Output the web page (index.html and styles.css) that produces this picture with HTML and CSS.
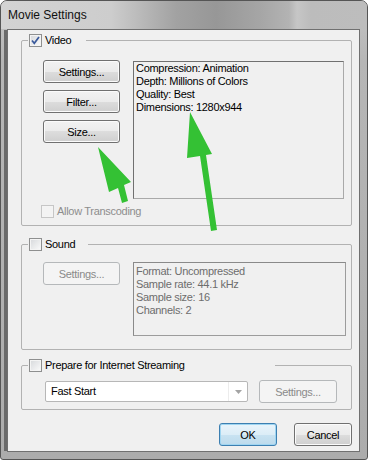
FILE: index.html
```html
<!DOCTYPE html>
<html lang="en">
<head>
    <meta charset="UTF-8">
    <title>Movie Settings</title>
    <link rel="stylesheet" href="styles.css">
</head>
<body>

    <div class="window">
        <div class="titlebar">Movie Settings</div>

        <div class="client">

            <!-- Video -->
            <fieldset class="group">
                <legend class="group-title title-video">
                    <span class="check checked">
                        <svg width="11" height="11" viewBox="0 0 11 11"><polyline points="2,5.5 4.3,8.3 9,2" fill="none" stroke="#3b5a9c" stroke-width="1.7"/></svg>
                    </span>
                    Video
                </legend>
                <div class="group-body video-body">
                    <div class="group-row">
                        <div class="button-stack">
                            <button class="btn">Settings...</button>
                            <button class="btn">Filter...</button>
                            <button class="btn">Size...</button>
                        </div>
                        <div class="info info-video">
                            <div>Compression: Animation</div>
                            <div>Depth: Millions of Colors</div>
                            <div>Quality: Best</div>
                            <div>Dimensions: 1280x944</div>
                        </div>
                    </div>
                    <div class="option disabled">
                        <span class="check"></span>
                        Allow Transcoding
                    </div>
                </div>
            </fieldset>

            <!-- Sound -->
            <fieldset class="group group-sound">
                <legend class="group-title title-sound">
                    <span class="check"></span>
                    Sound
                </legend>
                <div class="group-body sound-body">
                    <div class="group-row">
                        <div class="button-stack">
                            <button class="btn" disabled>Settings...</button>
                        </div>
                        <div class="info info-sound">
                            <div>Format: Uncompressed</div>
                            <div>Sample rate: 44.1 kHz</div>
                            <div>Sample size: 16</div>
                            <div>Channels: 2</div>
                        </div>
                    </div>
                </div>
            </fieldset>

            <!-- Streaming -->
            <fieldset class="group group-stream">
                <legend class="group-title title-stream">
                    <span class="check"></span>
                    Prepare for Internet Streaming
                </legend>
                <div class="group-body stream-body">
                    <div class="combo">
                        <span class="combo-text">Fast Start</span>
                        <span class="combo-arrow">
                            <svg width="7" height="4" viewBox="0 0 7 4"><polygon points="0,0 7,0 3.5,4" fill="#a4a4a4"/></svg>
                        </span>
                    </div>
                    <button class="btn btn-wide" disabled>Settings...</button>
                </div>
            </fieldset>

            <div class="dialog-buttons">
                <button class="btn btn-dialog btn-default">OK</button>
                <button class="btn btn-dialog">Cancel</button>
            </div>
        </div>

        <!-- green annotation arrows -->
        <svg class="arrows" width="368" height="460" viewBox="0 0 368 460">
            <polygon points="98,147 131,182 124,185 128,201 122,203 118,188 109,192" fill="#34c134"/>
            <polygon points="190,112 212,154 206,155 217,230 211,231 200,156 187,158" fill="#34c134"/>
        </svg>
    </div>

</body>
</html>
```

FILE: styles.css
```css
body {
    margin: 0;
    background-color: #ffffff;
    font-family: "Liberation Sans", Arial, sans-serif;
    font-size: 11px;
    letter-spacing: -0.3px;
    color: #000;
}
.window {
    position: relative;
    width: 368px;
    height: 460px;
    box-sizing: border-box;
    border: 1px solid #555;
    border-radius: 7px 7px 3px 3px;
    background: linear-gradient(180deg, #c4c4c4 0, #b6b6b6 60px, #acacac 100%);
    overflow: hidden;
}
.titlebar {
    height: 28px;
    line-height: 28px;
    padding-left: 7px;
    font-size: 12px;
    letter-spacing: 0;
    color: #111;
    background: linear-gradient(90deg, #d3d3d3 0, #cdcdcd 110px, #a2a2a2 175px, #979797 215px, #a6a6a6 260px, #b3b3b3 288px, #c6c6c6 296px, #bcbcbc 310px, #bdbdbd 100%);
}
.client {
    box-sizing: border-box;
    width: 353px;
    height: 423px;
    margin-left: 6px;
    border: 1px solid #707070;
    background-color: #f0f0f0;
    padding: 4px 0 0 13px;
    box-shadow: -4px 0 0 -1px #6a6a6a;
}

/* group boxes */
.group {
    box-sizing: border-box;
    width: 331px;
    margin: 0;
    padding: 0;
    min-width: 0;
    border: 1px solid #b2b2b2;
    border-radius: 2px;
}
.group-sound {
    margin-top: 12px;
}
.group-stream {
    margin-top: 9px;
}
.group-title {
    box-sizing: border-box;
    display: flex;
    align-items: center;
    gap: 3px;
    height: 13px;
    line-height: 13px;
    margin-left: 6px;
    padding: 0 0 0 1px;
}
.title-video { width: 58px; }
.title-sound { width: 60px; }
.title-stream { width: 247px; }

.check {
    box-sizing: border-box;
    flex: none;
    width: 13px;
    height: 13px;
    border: 1px solid #8e8f8f;
    background: linear-gradient(135deg, #d6d8db, #fbfbfb);
    box-shadow: inset 0 0 0 1px #f4f4f4;
}
.check svg {
    display: block;
}
.option {
    display: flex;
    align-items: center;
    gap: 3px;
    height: 13px;
    line-height: 13px;
    margin: 6px 0 0 -2px;
}
.option.disabled {
    color: #8d8d8d;
}
.option.disabled .check {
    border-color: #c6c6c6;
    background: #f3f3f3;
}

.video-body {
    padding: 13px 0 7px 21px;
}
.sound-body {
    padding: 11px 0 13px 21px;
}
.stream-body {
    display: flex;
    align-items: center;
    gap: 11px;
    padding: 8px 0 6px 23px;
}
.group-row {
    display: flex;
    align-items: flex-start;
    gap: 13px;
}
.button-stack {
    display: flex;
    flex-direction: column;
    gap: 7px;
}

/* buttons */
.btn {
    box-sizing: border-box;
    width: 77px;
    height: 23px;
    padding: 0;
    font: inherit;
    letter-spacing: inherit;
    color: #000;
    border: 1px solid #707070;
    border-radius: 3px;
    background: linear-gradient(180deg, #f2f2f2 0%, #ebebeb 50%, #dddddd 50%, #cfcfcf 100%);
    box-shadow: inset 0 0 0 1px #fbfbfb;
}
.btn:disabled {
    color: #8a8a8a;
    border-color: #b5b8ba;
    background: #f4f4f4;
    box-shadow: none;
}
.btn-wide {
    width: 78px;
}
.btn-dialog {
    width: 58px;
}
.btn-default {
    border-color: #3c7fb1;
    background: linear-gradient(180deg, #e9f4fb 0%, #dcedf7 50%, #c9e3f2 50%, #bcdaec 100%);
    box-shadow: inset 0 0 0 1px #9fd5f1;
}

/* info boxes */
.info {
    box-sizing: border-box;
    line-height: 13px;
    padding: 0 2px;
    border-style: solid;
    border-width: 1px;
    border-color: #707070 #a9a9a9 #a9a9a9 #707070;
}
.info-video {
    width: 211px;
    height: 138px;
    margin-top: 1px;
}
.info-sound {
    width: 213px;
    height: 74px;
    padding-top: 2px;
    color: #6d6d6d;
    border-color: #8a8a8a #9c9c9c #9c9c9c #8a8a8a;
}

/* combo box */
.combo {
    box-sizing: border-box;
    display: flex;
    width: 203px;
    height: 21px;
    border: 1px solid #b7b7b7;
    border-radius: 2px;
    background-color: #fff;
}
.combo-text {
    flex: 1;
    line-height: 19px;
    padding-left: 5px;
}
.combo-arrow {
    display: flex;
    align-items: center;
    justify-content: center;
    width: 18px;
    border-left: 1px solid #ececec;
}
.combo-arrow svg {
    display: block;
}

.dialog-buttons {
    display: flex;
    justify-content: flex-end;
    gap: 17px;
    width: 331px;
    margin-top: 13px;
}

.arrows {
    position: absolute;
    left: -1px;
    top: -1px;
    pointer-events: none;
}
```
